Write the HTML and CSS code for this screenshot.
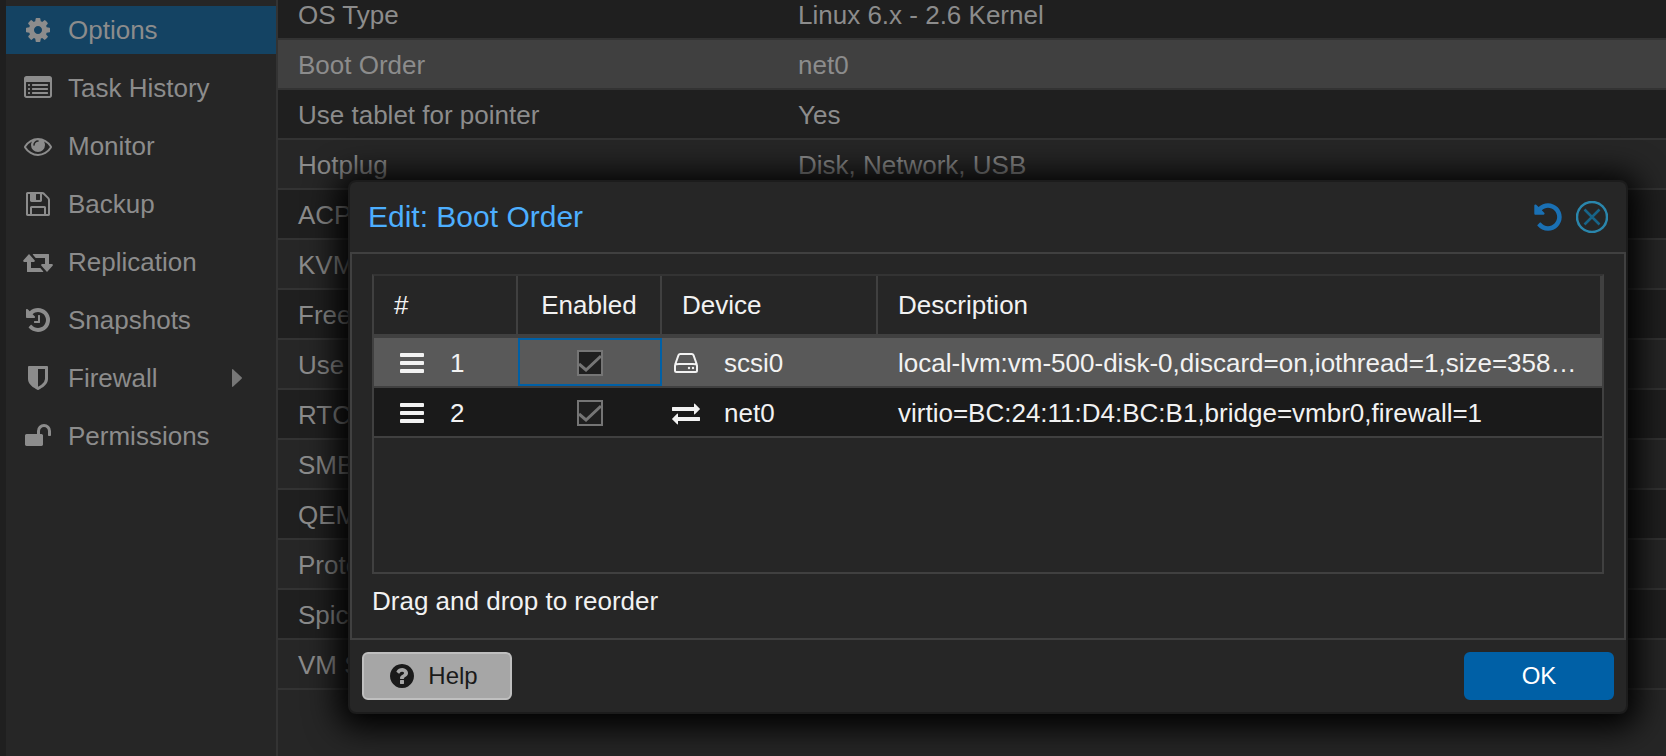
FILE: index.html
```html
<!DOCTYPE html>
<html lang="en">
<head>
    <meta charset="UTF-8">
    <meta name="viewport" content="width=device-width, initial-scale=1.0">
    <title>Boot Order</title>
    <link rel="stylesheet" href="styles.css">
</head>
<body>
    <div class="page">
        <nav class="sidebar">
            <a href="#" class="nav-item active">
                <svg class="icon" viewBox="0 0 1792 1792"><path d="M1152 896q0-106-75-181t-181-75-181 75-75 181 75 181 181 75 181-75 75-181zm512-109v222q0 12-8 23t-20 13l-185 28q-19 54-39 91 35 50 107 138 10 12 10 25t-9 23q-27 37-99 108t-94 71q-12 0-26-9l-138-108q-44 23-91 38-16 136-29 186-7 28-36 28h-222q-14 0-24.5-8.5t-11.5-21.5l-28-184q-49-16-90-37l-141 107q-10 9-25 9-14 0-25-11-126-114-165-168-7-10-7-23 0-12 8-23 15-21 51-66.5t54-70.5q-27-50-41-99l-183-27q-13-2-21-12.5t-8-23.5v-222q0-12 8-23t19-13l186-28q14-46 39-92-40-57-107-138-10-12-10-24 0-10 9-23 26-36 98.5-107.5t94.5-71.5q13 0 26 10l138 107q44-23 91-38 16-136 29-186 7-28 36-28h222q14 0 24.5 8.5t11.5 21.5l28 184q49 16 90 37l142-107q9-9 24-9 13 0 25 10 129 119 165 170 7 8 7 22 0 12-8 23-15 21-51 66.5t-54 70.5q26 50 41 98l183 28q13 2 21 12.5t8 23.5z"/></svg>
                <span>Options</span>
            </a>
            <a href="#" class="nav-item">
                <svg class="icon" viewBox="0 0 1792 1792"><path d="M384 1184v64q0 13-9.5 22.5t-22.5 9.5h-64q-13 0-22.5-9.5t-9.5-22.5v-64q0-13 9.5-22.5t22.5-9.5h64q13 0 22.5 9.5t9.5 22.5zm0-256v64q0 13-9.5 22.5t-22.5 9.5h-64q-13 0-22.5-9.5t-9.5-22.5v-64q0-13 9.5-22.5t22.5-9.5h64q13 0 22.5 9.5t9.5 22.5zm0-256v64q0 13-9.5 22.5t-22.5 9.5h-64q-13 0-22.5-9.5t-9.5-22.5v-64q0-13 9.5-22.5t22.5-9.5h64q13 0 22.5 9.5t9.5 22.5zm1152 512v64q0 13-9.5 22.5t-22.5 9.5h-960q-13 0-22.5-9.5t-9.5-22.5v-64q0-13 9.5-22.5t22.5-9.5h960q13 0 22.5 9.5t9.5 22.5zm0-256v64q0 13-9.5 22.5t-22.5 9.5h-960q-13 0-22.5-9.5t-9.5-22.5v-64q0-13 9.5-22.5t22.5-9.5h960q13 0 22.5 9.5t9.5 22.5zm0-256v64q0 13-9.5 22.5t-22.5 9.5h-960q-13 0-22.5-9.5t-9.5-22.5v-64q0-13 9.5-22.5t22.5-9.5h960q13 0 22.5 9.5t9.5 22.5zm128 704v-832q0-13-9.5-22.5t-22.5-9.5h-1472q-13 0-22.5 9.5t-9.5 22.5v832q0 13 9.5 22.5t22.5 9.5h1472q13 0 22.5-9.5t9.5-22.5zm128-1088v1088q0 66-47 113t-113 47h-1472q-66 0-113-47t-47-113v-1088q0-66 47-113t113-47h1472q66 0 113 47t47 113z"/></svg>
                <span>Task History</span>
            </a>
            <a href="#" class="nav-item">
                <svg class="icon" viewBox="0 0 1792 1792"><path d="M1664 960q-152-236-381-353 61 104 61 225 0 185-131.5 316.5t-316.5 131.5-316.5-131.5-131.5-316.5q0-121 61-225-229 117-381 353 133 205 333.5 326.5t434.5 121.5 434.5-121.5 333.5-326.5zm-720-384q0-20-14-34t-34-14q-125 0-214.5 89.5t-89.5 214.5q0 20 14 34t34 14 34-14 14-34q0-86 61-147t147-61q20 0 34-14t14-34zm848 384q0 34-20 69-140 230-376.5 368.5t-499.5 138.5-499.5-139-376.5-368q-20-35-20-69t20-69q140-229 376.5-368t499.5-139 499.5 139 376.5 368q20 35 20 69z"/></svg>
                <span>Monitor</span>
            </a>
            <a href="#" class="nav-item">
                <svg class="icon" viewBox="0 0 1792 1792"><path d="M512 1536h768v-384h-768v384zm896 0h128v-896q0-14-10-38.5t-20-34.5l-281-281q-10-10-34-20t-39-10v416q0 40-28 68t-68 28h-576q-40 0-68-28t-28-68v-416h-128v1280h128v-416q0-40 28-68t68-28h832q40 0 68 28t28 68v416zm-384-928v-320q0-13-9.5-22.5t-22.5-9.5h-192q-13 0-22.5 9.5t-9.5 22.5v320q0 13 9.5 22.5t22.5 9.5h192q13 0 22.5-9.5t9.5-22.5zm640 32v928q0 40-28 68t-68 28h-1344q-40 0-68-28t-28-68v-1344q0-40 28-68t68-28h928q40 0 88 20t76 48l280 280q28 28 48 76t20 88z"/></svg>
                <span>Backup</span>
            </a>
            <a href="#" class="nav-item">
                <svg class="icon" viewBox="0 0 28 28"><path d="M5 6L10.800 12.600Q11.200 13.500 10 14H7V20H16.300L19.300 23.500Q19.300 24 18.800 24H3.500Q3 24 3 23.500V14H0Q-1.200 13.500-.8 12.600ZM23 24L17.200 17.400Q16.800 16.500 18 16H21V10H11.700L8.700 6.500Q8.700 6 9.200 6H24.500Q25 6 25 6.500V16H28Q29.200 16.500 28.800 17.400Z"/></svg>
                <span>Replication</span>
            </a>
            <a href="#" class="nav-item">
                <svg class="icon" viewBox="0 0 1792 1792"><path d="M1664 896q0 156-61 298t-164 245-245 164-298 61q-172 0-327-72.5t-264-204.5q-7-10-6.5-22.5t8.5-20.5l137-138q10-9 25-9 16 2 23 12 73 95 179 147t225 52q104 0 198.5-40.5t163.5-109.5 109.5-163.5 40.5-198.5-40.5-198.5-109.5-163.5-163.5-109.5-198.5-40.5q-98 0-188 35.5t-160 101.5l137 138q31 30 14 69-17 40-59 40h-448q-26 0-45-19t-19-45v-448q0-42 40-59 39-17 69 14l130 129q107-101 244.5-156.5t284.5-55.5q156 0 298 61t245 164 164 245 61 298zm-640-288v448q0 14-9 23t-23 9h-320q-14 0-23-9t-9-23v-64q0-14 9-23t23-9h224v-352q0-14 9-23t23-9h64q14 0 23 9t9 23z"/></svg>
                <span>Snapshots</span>
            </a>
            <a href="#" class="nav-item">
                <svg class="icon" viewBox="0 0 1792 1792"><path d="M1344 960v-640h-448v1137q119-63 213-137 235-184 235-360zm192-768v768q0 86-33.5 170.5t-83 150-118 127.5-126.5 103-121 77.5-89.5 49.5-42.5 20q-12 6-26 6t-26-6q-16-7-42.500-20t-89.500-49.500-121-77.500-126.500-103-118-127.500-83-150-33.500-170.500v-768q0-26 19-45t45-19h1152q26 0 45 19t19 45z"/></svg>
                <span>Firewall</span>
                <svg class="caret" viewBox="0 0 10 18"><path d="M0 1Q0 -.6 1.200 .4L9.600 8.300Q10.300 9 9.600 9.700L1.200 17.600Q0 18.600 0 17Z"/></svg>
            </a>
            <a href="#" class="nav-item">
                <svg class="icon" viewBox="0 0 1792 1792"><path d="M1728 576v256q0 26-19 45t-45 19h-64q-26 0-45-19t-19-45v-256q0-106-75-181t-181-75-181 75-75 181v192h96q40 0 68 28t28 68v576q0 40-28 68t-68 28h-960q-40 0-68-28t-28-68v-576q0-40 28-68t68-28h672v-192q0-185 131.5-316.5t316.5-131.5 316.5 131.5 131.5 316.5z"/></svg>
                <span>Permissions</span>
            </a>
        </nav>
        <main class="options">
            <table class="options-table">
                <tr><td class="name">OS Type</td><td>Linux 6.x - 2.6 Kernel</td></tr>
                <tr class="selected"><td class="name">Boot Order</td><td>net0</td></tr>
                <tr><td class="name">Use tablet for pointer</td><td>Yes</td></tr>
                <tr><td class="name">Hotplug</td><td>Disk, Network, USB</td></tr>
                <tr><td class="name">ACPI support</td><td></td></tr>
                <tr><td class="name">KVM hardware virtualization</td><td></td></tr>
                <tr><td class="name">Freeze CPU at startup</td><td></td></tr>
                <tr><td class="name">Use local time for RTC</td><td></td></tr>
                <tr><td class="name">RTC start date</td><td></td></tr>
                <tr><td class="name">SMBIOS settings (type1)</td><td></td></tr>
                <tr><td class="name">QEMU Guest Agent</td><td></td></tr>
                <tr><td class="name">Protection</td><td></td></tr>
                <tr><td class="name">Spice Enhancements</td><td></td></tr>
                <tr><td class="name">VM State storage</td><td></td></tr>
            </table>
        </main>
    </div>

    <div class="dialog" role="dialog" aria-labelledby="dialogTitle">
        <div class="dialog-header">
            <h1 id="dialogTitle">Edit: Boot Order</h1>
            <button type="button" class="tool" aria-label="Reset">
                <svg viewBox="0 0 1792 1792"><path fill="#1a70b4" d="M1664 896q0 156-61 298t-164 245-245 164-298 61q-172 0-327-72.5t-264-204.5q-7-10-6.5-22.5t8.500-20.500l137-138q10-9 25-9 16 2 23 12 73 95 179 147t225 52q104 0 198.500-40.500t163.500-109.500 109.500-163.500 40.500-198.500-40.500-198.500-109.500-163.500-163.500-109.500-198.500-40.500q-98 0-188 35.500t-160 101.500l137 138q31 30 14 69-17 40-59 40h-448q-26 0-45-19t-19-45v-448q0-42 40-59 39-17 69 14l130 129q107-101 244.500-156.500t284.500-55.500q156 0 298 61t245 164 164 245 61 298z"/></svg>
            </button>
            <button type="button" class="tool" aria-label="Close">
                <svg viewBox="0 0 32 32" fill="none">
                    <circle cx="16" cy="16" r="15" stroke="#2a86ac" stroke-width="2.500"/>
                    <path d="M8.500 8.500L23.500 23.500M23.500 8.500L8.500 23.500" stroke="#176488" stroke-width="2.500"/>
                </svg>
            </button>
        </div>
        <div class="dialog-body">
            <div class="grid">
                <table class="boot-table">
                    <thead>
                        <tr>
                            <th class="col-num">#</th>
                            <th class="col-enabled">Enabled</th>
                            <th class="col-device">Device</th>
                            <th>Description</th>
                        </tr>
                    </thead>
                    <tbody>
                        <tr class="selected">
                            <td>
                                <div class="cell handle">
                                    <svg class="icon" viewBox="0 0 1792 1792"><path d="M1664 1344v128q0 26-19 45t-45 19h-1408q-26 0-45-19t-19-45v-128q0-26 19-45t45-19h1408q26 0 45 19t19 45zm0-512v128q0 26-19 45t-45 19h-1408q-26 0-45-19t-19-45v-128q0-26 19-45t45-19h1408q26 0 45 19t19 45zm0-512v128q0 26-19 45t-45 19h-1408q-26 0-45-19t-19-45v-128q0-26 19-45t45-19h1408q26 0 45 19t19 45z"/></svg>
                                    <span>1</span>
                                </div>
                            </td>
                            <td class="focused"><div class="cell check"><input type="checkbox" aria-label="Enable scsi0" checked></div></td>
                            <td>
                                <div class="cell device">
                                    <svg class="icon" viewBox="0 0 28 28"><path fill="none" stroke="currentColor" stroke-width="2" d="M3 16.500Q3 15 7 15H21Q25 15 25 16.500V21.500Q25 23 23.500 23H4.500Q3 23 3 21.500ZM3 16L6.500 6.200Q7 5 8.200 5H19.800Q21 5 21.500 6.200L25 16"/><circle cx="17" cy="19" r="1.200"/><circle cx="21" cy="19" r="1.200"/></svg>
                                    <span>scsi0</span>
                                </div>
                            </td>
                            <td class="desc">local-lvm:vm-500-disk-0,discard=on,iothread=1,size=3584M</td>
                        </tr>
                        <tr>
                            <td>
                                <div class="cell handle">
                                    <svg class="icon" viewBox="0 0 1792 1792"><path d="M1664 1344v128q0 26-19 45t-45 19h-1408q-26 0-45-19t-19-45v-128q0-26 19-45t45-19h1408q26 0 45 19t19 45zm0-512v128q0 26-19 45t-45 19h-1408q-26 0-45-19t-19-45v-128q0-26 19-45t45-19h1408q26 0 45 19t19 45zm0-512v128q0 26-19 45t-45 19h-1408q-26 0-45-19t-19-45v-128q0-26 19-45t45-19h1408q26 0 45 19t19 45z"/></svg>
                                    <span>2</span>
                                </div>
                            </td>
                            <td><div class="cell check"><input type="checkbox" aria-label="Enable net0" checked></div></td>
                            <td>
                                <div class="cell device">
                                    <svg class="icon" viewBox="0 0 1792 1792"><path d="M1792 1184v192q0 13-9.5 22.5t-22.5 9.5h-1376v192q0 13-9.5 22.5t-22.5 9.5q-12 0-24-10l-319-320q-9-9-9-22 0-14 9-23l320-320q9-9 23-9 13 0 22.500 9.500t9.500 22.500v192h1376q13 0 22.500 9.500t9.500 22.500zm0-544q0 14-9 23l-320 320q-9 9-23 9-13 0-22.500-9.500t-9.500-22.500v-192h-1376q-13 0-22.500-9.500t-9.500-22.500v-192q0-13 9.500-22.500t22.500-9.500h1376v-192q0-14 9-23t23-9q12 0 24 10l319 319q9 9 9 23z"/></svg>
                                    <span>net0</span>
                                </div>
                            </td>
                            <td class="desc">virtio=BC:24:11:D4:BC:B1,bridge=vmbr0,firewall=1</td>
                        </tr>
                    </tbody>
                </table>
            </div>
            <p class="hint">Drag and drop to reorder</p>
        </div>
        <div class="dialog-footer">
            <button type="button" class="button help">
                <svg class="icon" viewBox="0 0 1792 1792"><path d="M1024 1376v-192q0-14-9-23t-23-9h-192q-14 0-23 9t-9 23v192q0 14 9 23t23 9h192q14 0 23-9t9-23zm256-672q0-88-55.5-163t-138.5-116-170-41q-243 0-371 213-15 24 8 42l132 100q7 6 19 6 16 0 25-12 53-68 86-92 34-24 86-24 48 0 85.5 26t37.5 59q0 38-20 61t-68 45q-63 28-115.5 86.5t-52.5 125.5v36q0 14 9 23t23 9h192q14 0 23-9t9-23q0-19 21.5-49.5t54.5-49.5q32-18 49-28.5t46-35 44.5-48 28-60.5 12.5-81zm384 192q0 209-103 385.5t-279.5 279.5-385.5 103-385.5-103-279.5-279.5-103-385.5 103-385.5 279.5-279.5 385.5-103 385.500 103 279.500 279.500 103 385.500z"/></svg>
                Help
            </button>
            <button type="button" class="button ok">OK</button>
        </div>
    </div>
</body>
</html>
```
FILE: styles.css
```css
* {
    box-sizing: border-box;
}
body {
    margin: 0;
    background: #262626;
    color: #8c8c8c;
    font-family: "Liberation Sans", Arial, sans-serif;
    font-size: 26px;
    overflow: hidden;
}
.page {
    display: flex;
    height: 100vh;
    overflow: hidden;
}
.icon {
    width: 28px;
    height: 28px;
    flex: none;
    fill: currentColor;
    overflow: visible;
}

/* left navigation */
.sidebar {
    flex: none;
    width: 278px;
    display: flex;
    flex-direction: column;
    gap: 10px;
    padding-top: 6px;
    border-left: 6px solid #1f1f1f;
    border-right: 2px solid #333;
}
.nav-item {
    display: flex;
    align-items: center;
    gap: 16px;
    height: 48px;
    padding: 0 34px 0 18px;
    color: inherit;
    text-decoration: none;
}
.nav-item.active {
    background: #144363;
}
.caret {
    width: 10px;
    height: 18px;
    margin-left: auto;
    fill: #777;
}

/* options list */
.options {
    flex: 1;
    min-width: 0;
}
.options-table {
    width: 100%;
    margin-top: -10px;
    border-spacing: 0;
    table-layout: fixed;
}
.options-table td {
    height: 50px;
    padding: 2px 20px 0;
    border-bottom: 2px solid #333;
    white-space: nowrap;
}
.options-table .name {
    width: 500px;
}
.options-table tr:nth-child(odd) {
    background: #1f1f1f;
}
.options-table tr.selected {
    background: #404040;
}

/* dialog */
.dialog {
    position: absolute;
    top: 180px;
    left: 348px;
    right: 38px;
    background: #262626;
    color: #f2f2f2;
    border: 2px solid #1c1c1c;
    border-radius: 8px;
    box-shadow: 0 4px 32px 10px #000;
}
.dialog-header {
    display: flex;
    align-items: center;
    gap: 12px;
    height: 70px;
    padding: 0 18px;
}
.dialog-header h1 {
    flex: 1;
    margin: 0;
    color: #4dafff;
    font-size: 30px;
    font-weight: normal;
}
.tool {
    width: 32px;
    height: 32px;
    padding: 0;
    border: none;
    background: none;
    cursor: pointer;
}
.tool svg {
    display: block;
}
.dialog-body {
    padding: 20px;
    border: 2px solid #404040;
}
.grid {
    height: 300px;
    border: 2px solid #404040;
    border-top-color: #333;
}
.boot-table {
    width: 100%;
    border-spacing: 0;
    table-layout: fixed;
}
.boot-table th {
    height: 62px;
    padding: 0 20px;
    border-right: 2px solid #404040;
    border-bottom: 4px solid #404040;
    font-weight: normal;
    text-align: left;
}
.boot-table .col-num {
    width: 144px;
}
.boot-table .col-enabled {
    width: 144px;
    text-align: center;
}
.boot-table .col-device {
    width: 216px;
}
.boot-table td {
    height: 50px;
    padding: 2px 0 0;
    border-bottom: 2px solid #404040;
    background: #1a1a1a;
}
.boot-table .selected td {
    background: #595959;
}
.boot-table .focused {
    box-shadow: inset 0 0 0 2px #0060a6;
}
.boot-table .desc {
    padding: 2px 20px 0;
    overflow: hidden;
    text-overflow: ellipsis;
    white-space: nowrap;
}
.cell {
    display: flex;
    align-items: center;
}
.handle {
    gap: 24px;
    padding-left: 24px;
}
.device {
    gap: 24px;
    padding-left: 10px;
}
.check {
    justify-content: center;
}
.check input {
    appearance: none;
    width: 26px;
    height: 26px;
    margin: 0;
    border: 2px solid #757575;
    background: #1f1f1f url("data:image/svg+xml,%3Csvg xmlns='http://www.w3.org/2000/svg' viewBox='0 0 22 22'%3E%3Cpath d='M0 12L7 18L22 4' fill='none' stroke='%23757575' stroke-width='3'/%3E%3C/svg%3E");
}
.hint {
    margin: 10px 0 0;
    line-height: 34px;
}
.dialog-footer {
    display: flex;
    justify-content: space-between;
    padding: 12px;
}
.button {
    display: flex;
    align-items: center;
    justify-content: center;
    gap: 12px;
    width: 150px;
    height: 48px;
    padding: 0;
    border: 2px solid #0060a6;
    border-radius: 6px;
    font-family: inherit;
    font-size: 24px;
    cursor: pointer;
}
.help {
    padding-right: 8px;
    background: #a6a6a6;
    border-color: #bfbfbf;
    color: #1a1a1a;
}
.ok {
    background: #0060a6;
    color: #fff;
}
```
